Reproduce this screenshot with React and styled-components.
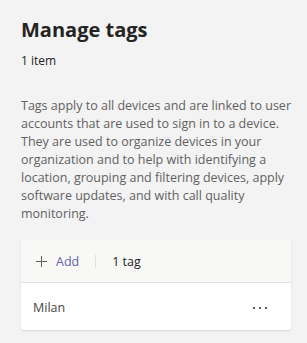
import React from "react";
import styled, { createGlobalStyle } from "styled-components";

const GlobalStyle = createGlobalStyle`
  html, body {
    margin: 0;
    padding: 0;
    background: #f3f3f3;
    font-family: "Segoe UI", "Open Sans", sans-serif;
  }
  * { box-sizing: border-box; }
`;

const Page = styled.div`
  padding: 16px 16px 16px 21px;
  background: #f3f3f3;
  min-height: 343px;
`;

const Title = styled.h1`
  margin: 0;
  font-size: 20px;
  line-height: 28px;
  font-weight: 700;
  color: #252423;
`;

const Count = styled.div`
  margin-top: 9px;
  font-size: 12px;
  line-height: 16px;
  color: #252423;
`;

const Description = styled.p`
  margin: 28px 0 0;
  font-size: 12.5px;
  line-height: 18px;
  color: #616161;
`;

const Card = styled.div`
  margin-top: 17px;
  width: 270px;
  background: #fff;
  border-radius: 3px;
  box-shadow: 0 1px 2px rgba(0, 0, 0, 0.12);
  overflow: hidden;
`;

const Toolbar = styled.div`
  display: flex;
  align-items: center;
  height: 43px;
  padding: 0 15px;
  background: #f8f8f7;
  border-bottom: 1px solid #e1dfdd;
  font-size: 12.5px;
`;

const AddButton = styled.button`
  display: flex;
  align-items: center;
  gap: 9px;
  border: 0;
  padding: 0;
  background: none;
  font: inherit;
  color: #6264a7;
`;

const Divider = styled.span`
  width: 1px;
  height: 13px;
  background: #e1dfdd;
  margin: 0 16px;
`;

const TagCount = styled.span`
  color: #252423;
`;

const Row = styled.div`
  display: flex;
  align-items: center;
  justify-content: space-between;
  height: 47px;
  padding: 2px 24px 0 12px;
  font-size: 12.5px;
  color: #484644;
`;

const More = styled.span`
  display: flex;
  gap: 4px;
`;

const Dot = styled.span`
  width: 2px;
  height: 2px;
  background: #616161;
`;

export default function App() {
  return (
    <>
      <GlobalStyle />
      <Page>
        <Title>Manage tags</Title>
        <Count>1 item</Count>
        <Description>
          Tags apply to all devices and are linked to user accounts that are
          used to sign in to a device. They are used to organize devices in your
          organization and to help with identifying a location, grouping and
          filtering devices, apply software updates, and with call quality
          monitoring.
        </Description>
        <Card>
          <Toolbar>
            <AddButton>
              <svg width="11" height="11" viewBox="0 0 11 11">
                <path d="M5.5 0v11M0 5.5h11" stroke="#616161" strokeWidth="1" />
              </svg>
              Add
            </AddButton>
            <Divider />
            <TagCount>1 tag</TagCount>
          </Toolbar>
          <Row>
            Milan
            <More>
              <Dot />
              <Dot />
              <Dot />
            </More>
          </Row>
        </Card>
      </Page>
    </>
  );
}
